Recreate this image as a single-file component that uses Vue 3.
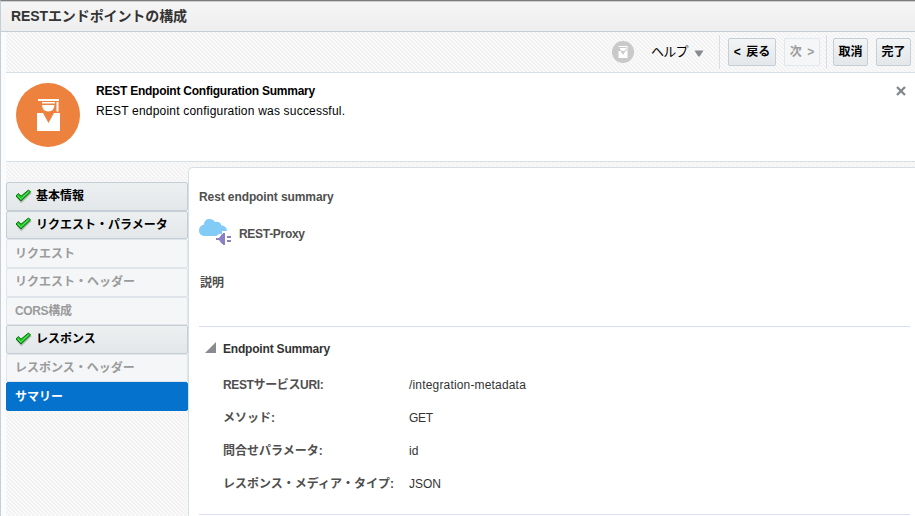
<script setup>
const steps = [
  { label: '基本情報', state: 'done' },
  { label: 'リクエスト・パラメータ', state: 'done' },
  { label: 'リクエスト', state: 'off' },
  { label: 'リクエスト・ヘッダー', state: 'off' },
  { label: 'CORS構成', state: 'off latin' },
  { label: 'レスポンス', state: 'done' },
  { label: 'レスポンス・ヘッダー', state: 'off' },
  { label: 'サマリー', state: 'current' },
]
const fields = [
  { label: 'RESTサービスURI:', value: '/integration-metadata', cls: 'uri' },
  { label: 'メソッド:', value: 'GET', cls: 'method' },
  { label: '問合せパラメータ:', value: 'id', cls: 'query' },
  { label: 'レスポンス・メディア・タイプ:', value: 'JSON', cls: 'media' },
]
</script>

<template>
  <div class="window">
    <header class="title"><span>RESTエンドポイントの構成</span></header>
    <div class="body">
      <div class="toolbar">
        <svg class="guide" viewBox="0 0 22 22">
          <circle cx="11" cy="11" r="11" fill="#c9c9c9" />
          <path d="M6.500 5h9v1h-9z M8 7h6q0 3-3 3T8 7z M14.500 6h1v4h-1z M6.500 10h2l2.500 4 2.500-4h2v7h-9z" fill="#fff" />
        </svg>
        <span class="help">ヘルプ</span>
        <svg class="arrow" viewBox="0 0 10 7"><path d="M.5 0.5h9L5.7 6.5H4.3z" fill="#858b90" /></svg>
        <i class="sep"></i>
        <button class="btn back">&lt; 戻る</button>
        <button class="btn next" disabled>次 &gt;</button>
        <i class="sep second"></i>
        <button class="btn cancel">取消</button>
        <button class="btn finish">完了</button>
      </div>
      <section class="message">
        <svg class="badge" viewBox="0 0 64 64">
          <circle cx="32" cy="32" r="32" fill="#ed813e" />
          <path d="M22 16h21v2H22z M26 19h13v1.500H26z M26 22h12.500q-.5 6.500-6.250 6.500T26 22z M40.500 19h2v9.500h-2z M21 30h6l5.500 10L38 30h6v18H21z" fill="#fff" />
        </svg>
        <div class="message-text">
          <strong>REST Endpoint Configuration Summary</strong>
          <p>REST endpoint configuration was successful.</p>
        </div>
        <svg class="close" viewBox="0 0 10 10"><path d="M1 1l8 8M9 1L1 9" stroke="#82878c" stroke-width="2.300" /></svg>
      </section>
      <div class="content">
        <nav class="steps">
          <div v-for="s in steps" :key="s.label" class="step" :class="s.state">
            <svg v-if="s.state === 'done'" class="check" viewBox="0 0 17 14">
              <path d="M2 8.200l4.300 4.800L16 3.500" fill="none" stroke="#b5bbb5" stroke-width="2" />
              <path d="M1 7l2.300-2.500 2.700 2.700L13.500 1l2 2L6 12z" fill="#16c51f" stroke="#08700d" stroke-width="1" />
              <path d="M2.500 6.500l3.300 3.300 8-7.300" fill="none" stroke="#72e778" stroke-width=".9" />
            </svg>
            <span>{{ s.label }}</span>
          </div>
        </nav>
        <main class="panel">
          <h2>Rest endpoint summary</h2>
          <div class="proxy">
            <svg class="cloud" viewBox="0 0 33 28">
              <path d="M6 18C2 18 0 15.500 0 12.500S2 7 5 6.500C5 3 7.500 1 10.500 1c3 0 4.500 1.500 5.500 3 3-1 6 .500 6.500 3.500C26 7.500 28 10 28 13h-5v3h-3l-2.500 2z" fill="#81cbf6" />
              <path d="M17 20h3l3-4h1v-1h2v12h-2v-1h-1l-3-4h-3z M28 18h4v2h-4z M28 22h4v2h-4z" fill="#8b80c2" />
            </svg>
            <strong>REST-Proxy</strong>
          </div>
          <div class="desc">説明</div>
          <section class="summary">
            <h3>
              <svg viewBox="0 0 11 11"><path d="M0 11L11 0v11z" fill="#888b90" /></svg>
              <span>Endpoint Summary</span>
            </h3>
            <dl>
              <div v-for="f in fields" :key="f.label" class="field">
                <dt><span :class="f.cls">{{ f.label }}</span></dt>
                <dd :class="f.cls">{{ f.value }}</dd>
              </div>
            </dl>
          </section>
        </main>
      </div>
    </div>
  </div>
</template>

<style>
body { overflow: hidden; }
</style>

<style scoped>
* { box-sizing: border-box; }
.window {
  display: flex; flex-direction: column; height: 516px;
  border-top: 1px solid #7d7d80; border-left: 1px solid #c4ced7;
  background: #fbfbfb; color: #000;
  font: 12px "Liberation Sans", "Noto Sans CJK JP", sans-serif;
}
.title {
  display: flex; align-items: center; height: 31px; padding: 0 0 3px 10px;
  border-top: 1px solid #cfcfcf; border-bottom: 1px solid #c4ced7;
  background: linear-gradient(#f5f5f5, #eee); color: #333;
  font-size: 14px; font-weight: bold; white-space: nowrap; letter-spacing: -.1px;
}
.body {
  display: flex; flex-direction: column; flex: 1; min-height: 0; margin-left: 5px;
  background: repeating-linear-gradient(45deg, #f2f2f2 0, #f2f2f2 1px, #fafafa 1px, #fafafa 2.828px);
}
.toolbar { display: flex; align-items: center; height: 41px; padding-left: 606px; border-bottom: 1px solid #d6dfe6; }
.guide { width: 22px; height: 22px; flex: none; }
.help { width: 37px; margin-left: 17px; margin-right: 1px; font-size: 13px; letter-spacing: -.8px; line-height: 20px; white-space: nowrap; }
.arrow { width: 10px; height: 7px; margin: 2px 15px 0 5px; flex: none; }
.sep { width: 1px; height: 34px; background: #d6dfe6; flex: none; }
.sep.second { margin-left: 6px; }
.btn {
  height: 28px; padding: 1px 0 0; flex: none; border: 1px solid #c4ced7; border-radius: 2px;
  background: linear-gradient(#f2f4f5, #e3e7ea); color: #000;
  font: bold 12px/25px "Liberation Sans", "Noto Sans CJK JP", sans-serif; white-space: nowrap;
}
.back { width: 48px; margin-left: 8px; word-spacing: 2px; }
.next { width: 36px; margin-left: 8px; border-color: #dfe6ec; background: #f4f6f8; color: #9b9b9b; word-spacing: 2px; }
.cancel { width: 35px; margin-left: 6px; }
.finish { width: 35px; margin-left: 8px; }
.message { display: flex; height: 89px; padding: 10px 9px 0 10px; border-bottom: 1px solid #d6dfe6; background: #fff; }
.badge { width: 64px; height: 64px; flex: none; }
.message-text { flex: 1; margin-left: 16px; line-height: 20px; }
.message-text strong { display: block; line-height: 16px; letter-spacing: -.24px; }
.message-text p { margin: 2px 0 0; letter-spacing: .2px; }
.close { width: 10px; height: 10px; margin-top: 3px; }
.content { display: flex; flex: 1; min-height: 0; padding-top: 5px; }
.steps { display: flex; flex-direction: column; width: 182px; height: 229px; margin-top: 15px; flex: none; }
.step {
  display: flex; align-items: center; flex: 1; min-height: 0; padding: 0 0 0 8px;
  border: 1px solid #dfe5ea; border-radius: 2px;
  background: #f4f6f8; color: #9b9b9b; font-weight: bold; line-height: 20px; white-space: nowrap;
}
.step.latin span { letter-spacing: -.35px; }
.step.done { border-color: #c4ced7; background: linear-gradient(#edf0f1, #e3e7e9); color: #000; }
.step.current { background: #0572ce; border-color: #0572ce; color: #fff; }
.check { width: 17px; height: 14px; margin: -1px 4px 0 0; flex: none; }
.panel { flex: 1; min-width: 0; padding: 21px 5px 0 10px; border: solid #d6dfe6; border-width: 1px 0 0 1px; border-top-left-radius: 5px; background: #fff; color: #4f4f4f; }
h2 { margin: 0; font-size: 12px; line-height: 16px; letter-spacing: -.1px; }
.proxy { display: flex; align-items: center; height: 28px; margin-top: 13px; }
.cloud { width: 33px; height: 28px; margin-right: 7px; }
.proxy strong { padding-top: 4px; letter-spacing: -.3px; }
.desc { margin-top: 27px; padding-left: 1px; font-weight: bold; line-height: 20px; height: 53px; }
.summary { height: 189px; border: solid #d9def5; border-width: 1px 0; padding-top: 13px; }
h3 { display: flex; align-items: center; height: 18px; margin: 0; padding-left: 6px; color: #333; font-size: 12px; letter-spacing: -.19px; }
h3 svg { width: 11px; height: 11px; margin: -3px 7px 0 0; }
dl { margin: 10px 0 0 24px; }
.field { display: flex; align-items: center; height: 33px; line-height: 20px; }
dt { width: 186px; font-weight: bold; white-space: nowrap; }
dt .uri { letter-spacing: -.36px; }
dd { margin: 0; color: #333; }
dd.uri { letter-spacing: .17px; }
dd.method { letter-spacing: -.3px; }
</style>
